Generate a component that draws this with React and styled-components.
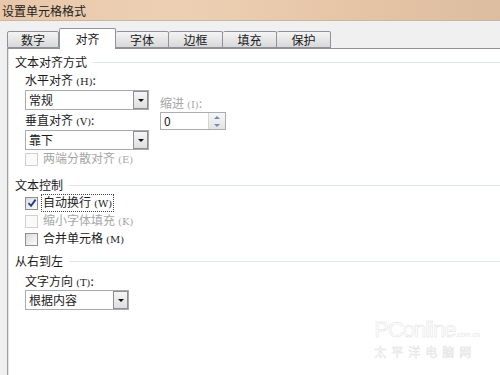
import React from "react";
import styled, { createGlobalStyle } from "styled-components";

const GlobalStyle = createGlobalStyle`
  html, body {
    margin: 0;
    padding: 0;
    background: #ffffff;
  }
  body {
    font-family: "Noto Sans CJK SC", "Liberation Sans", sans-serif;
    font-size: 12px;
    color: #1a1a1a;
  }
`;

const Window = styled.div`
  width: 500px;
  height: 375px;
  overflow: hidden;
  display: flex;
  flex-direction: column;
  background: #f0f0f0;
  position: relative;
`;

const TitleBar = styled.div`
  height: 21px;
  flex: none;
  display: flex;
  align-items: center;
  padding-left: 2px;
  background: linear-gradient(90deg, #e8c7a9 0%, #edd0b4 35%, #e6c5a6 70%, #dcbd9f 100%);
  border-bottom: 1px solid #c9b7a6;
  font-size: 12px;
  line-height: 14px;
  color: #222;
  box-sizing: border-box;
  padding-top: 1px;
`;

const TabStrip = styled.div`
  height: 27px;
  flex: none;
  display: flex;
  align-items: flex-end;
  padding-left: 7px;
  box-sizing: border-box;
`;

const Tab = styled.div`
  width: ${({ $w }) => $w}px;
  height: ${({ $active }) => ($active ? 21 : 17)}px;
  box-sizing: border-box;
  display: flex;
  align-items: center;
  justify-content: center;
  border: 1px solid #8f929a;
  border-bottom: ${({ $active }) => ($active ? "none" : "1px solid #8f929a")};
  border-left: ${({ $first, $active }) => ($first || $active ? "1px solid #8f929a" : "none")};
  border-radius: 2px 2px 0 0;
  background: ${({ $active }) =>
    $active ? "#ffffff" : "linear-gradient(#f4f4f4, #e6e6e6 50%, #d9d9d9)"};
  margin-bottom: ${({ $active }) => ($active ? "-1px" : "0")};
  position: relative;
  z-index: ${({ $active }) => ($active ? 2 : 1)};
  font-size: 12px;
  line-height: 14px;
  color: #1a1a1a;
  padding-top: ${({ $active }) => ($active ? "0" : "1px")};
`;

const Body = styled.div`
  flex: 1;
  padding-left: 7px;
  display: flex;
`;

const Panel = styled.div`
  flex: 1;
  background: #ffffff;
  border-top: 1px solid #8f929a;
  border-left: 1px solid #a0a0a0;
  box-shadow: inset 1px 0 0 #e4e4e4;
  padding: 5px 0 0 7px;
  display: flex;
  flex-direction: column;
`;

const SectionHead = styled.div`
  display: flex;
  align-items: center;
  gap: 6px;
  height: 16px;
  line-height: 16px;
  margin-top: ${({ $mt }) => $mt || 0}px;
  &::after {
    content: "";
    flex: 1;
    height: 1px;
    background: #dfe5ec;
  }
`;

const Indented = styled.div`
  padding-left: 10px;
  display: flex;
  flex-direction: column;
`;

const Label = styled.div`
  height: 16px;
  line-height: 16px;
  margin-top: ${({ $mt }) => $mt || 0}px;
  color: ${({ $disabled }) => ($disabled ? "#a6a6a6" : "#1a1a1a")};
  white-space: nowrap;
`;

const Key = styled.span`
  font-family: "DejaVu Serif", "Liberation Serif", serif;
  font-size: 10px;
  margin-left: 3px;
`;

const AlignGrid = styled.div`
  display: grid;
  grid-template-columns: 124px auto;
  column-gap: 11px;
  align-items: start;
`;

const Column = styled.div`
  display: flex;
  flex-direction: column;
`;

const SelectBox = styled.div`
  width: ${({ $w }) => $w}px;
  height: 20px;
  box-sizing: border-box;
  border: 1px solid #a9abb0;
  display: flex;
  align-items: stretch;
  margin-top: ${({ $mt }) => $mt || 0}px;
  background: #fff;
`;

const SelectText = styled.div`
  flex: 1;
  padding-left: 3px;
  line-height: 18px;
`;

const DropButton = styled.div`
  width: 15px;
  box-sizing: border-box;
  border: 1px solid #8e8f8f;
  background: linear-gradient(#f5f5f5, #dedede);
  display: flex;
  align-items: center;
  justify-content: center;
  &::before {
    content: "";
    border-left: 3px solid transparent;
    border-right: 3px solid transparent;
    border-top: 3px solid #111;
  }
`;

const SpinBox = styled.div`
  width: 66px;
  height: 18px;
  box-sizing: border-box;
  border: 1px solid #abadb3;
  display: flex;
  margin-top: 1px;
`;

const SpinText = styled.div`
  flex: 1;
  padding-left: 3px;
  line-height: 16px;
`;

const SpinButtons = styled.div`
  width: 16px;
  display: flex;
  flex-direction: column;
  border-left: 1px solid #d6d6d6;
  background: linear-gradient(#f7f7f7, #e3e3e3);
`;

const SpinHalf = styled.div`
  flex: 1;
  display: flex;
  align-items: center;
  justify-content: center;
  &::before {
    content: "";
    border-left: 3px solid transparent;
    border-right: 3px solid transparent;
    ${({ $up }) =>
      $up ? "border-bottom: 3px solid #6d8fb5;" : "border-top: 3px solid #6d8fb5;"}
  }
`;

const CheckRow = styled.div`
  display: flex;
  align-items: center;
  height: 18px;
  margin-top: ${({ $mt }) => $mt || 0}px;
  color: ${({ $disabled }) => ($disabled ? "#a6a6a6" : "#1a1a1a")};
`;

const Box = styled.div`
  width: 13px;
  height: 13px;
  box-sizing: border-box;
  border: 1px solid ${({ $disabled }) => ($disabled ? "#d0d0d0" : "#8f8f8f")};
  background: ${({ $disabled }) =>
    $disabled ? "#fafafa" : "linear-gradient(135deg, #dcdcdc, #fbfbfb)"};
  display: flex;
  align-items: center;
  justify-content: center;
  margin-right: 3px;
`;

const CheckText = styled.span`
  line-height: 14px;
  padding: 0 1px;
  border: 1px ${({ $focus }) => ($focus ? "dotted #444" : "solid transparent")};
`;

const Watermark = styled.div`
  position: absolute;
  right: 20px;
  bottom: 16px;
  display: flex;
  flex-direction: column;
  align-items: flex-start;
  pointer-events: none;
`;

const WmBrand = styled.div`
  font-family: "Liberation Sans", sans-serif;
  font-size: 22px;
  letter-spacing: -1px;
  line-height: 20px;
  -webkit-text-stroke: 0.5px #e2e2e2;
  color: #ffffff;
  span {
    font-size: 7px;
    letter-spacing: 0;
    -webkit-text-stroke: 0;
    color: #e6e6e6;
  }
`;

const WmName = styled.div`
  font-size: 12px;
  letter-spacing: 5px;
  line-height: 14px;
  color: #ffffff;
  -webkit-text-stroke: 0.5px #e2e2e2;
`;

const tabs = [
  { t: "数字", w: 52 },
  { t: "对齐", w: 57, active: true },
  { t: "字体", w: 53 },
  { t: "边框", w: 54 },
  { t: "填充", w: 54 },
  { t: "保护", w: 54 },
];

const Check = () => (
  <svg width="10" height="10" viewBox="0 0 10 10">
    <path d="M1.5 5.2 L4 7.8 L8.6 1.6" fill="none" stroke="#1c3f8f" strokeWidth="1.8" />
  </svg>
);

export default function App() {
  return (
    <>
      <GlobalStyle />
      <Window>
        <TitleBar>设置单元格格式</TitleBar>
        <TabStrip>
          {tabs.map((tab, i) => (
            <Tab key={tab.t} $w={tab.w} $active={tab.active} $first={i === 0}>
              {tab.t}
            </Tab>
          ))}
        </TabStrip>
        <Body>
          <Panel>
            <SectionHead>文本对齐方式</SectionHead>
            <Indented>
              <AlignGrid>
                <Column>
                  <Label $mt={2}>
                    水平对齐<Key>(H)</Key>:
                  </Label>
                  <SelectBox $w={124} $mt={2}>
                    <SelectText>常规</SelectText>
                    <DropButton />
                  </SelectBox>
                  <Label $mt={2}>
                    垂直对齐<Key>(V)</Key>:
                  </Label>
                  <SelectBox $w={124} $mt={2}>
                    <SelectText>靠下</SelectText>
                    <DropButton />
                  </SelectBox>
                  <CheckRow $disabled>
                    <Box $disabled />
                    <CheckText>
                      两端分散对齐<Key>(E)</Key>
                    </CheckText>
                  </CheckRow>
                </Column>
                <Column>
                  <Label $disabled $mt={25}>
                    缩进<Key>(I)</Key>:
                  </Label>
                  <SpinBox>
                    <SpinText>0</SpinText>
                    <SpinButtons>
                      <SpinHalf $up />
                      <SpinHalf />
                    </SpinButtons>
                  </SpinBox>
                </Column>
              </AlignGrid>
            </Indented>

            <SectionHead $mt={9}>文本控制</SectionHead>
            <Indented>
              <CheckRow $mt={1}>
                <Box>
                  <Check />
                </Box>
                <CheckText $focus>
                  自动换行<Key>(W)</Key>
                </CheckText>
              </CheckRow>
              <CheckRow $disabled>
                <Box $disabled />
                <CheckText>
                  缩小字体填充<Key>(K)</Key>
                </CheckText>
              </CheckRow>
              <CheckRow>
                <Box />
                <CheckText>
                  合并单元格<Key>(M)</Key>
                </CheckText>
              </CheckRow>
            </Indented>

            <SectionHead $mt={5}>从右到左</SectionHead>
            <Indented>
              <Label $mt={4}>
                文字方向<Key>(T)</Key>:
              </Label>
              <SelectBox $w={104} $mt={1}>
                <SelectText>根据内容</SelectText>
                <DropButton />
              </SelectBox>
            </Indented>
          </Panel>
        </Body>
        <Watermark>
          <WmBrand>
            PConline<span>.com.cn</span>
          </WmBrand>
          <WmName>太平洋电脑网</WmName>
        </Watermark>
      </Window>
    </>
  );
}
